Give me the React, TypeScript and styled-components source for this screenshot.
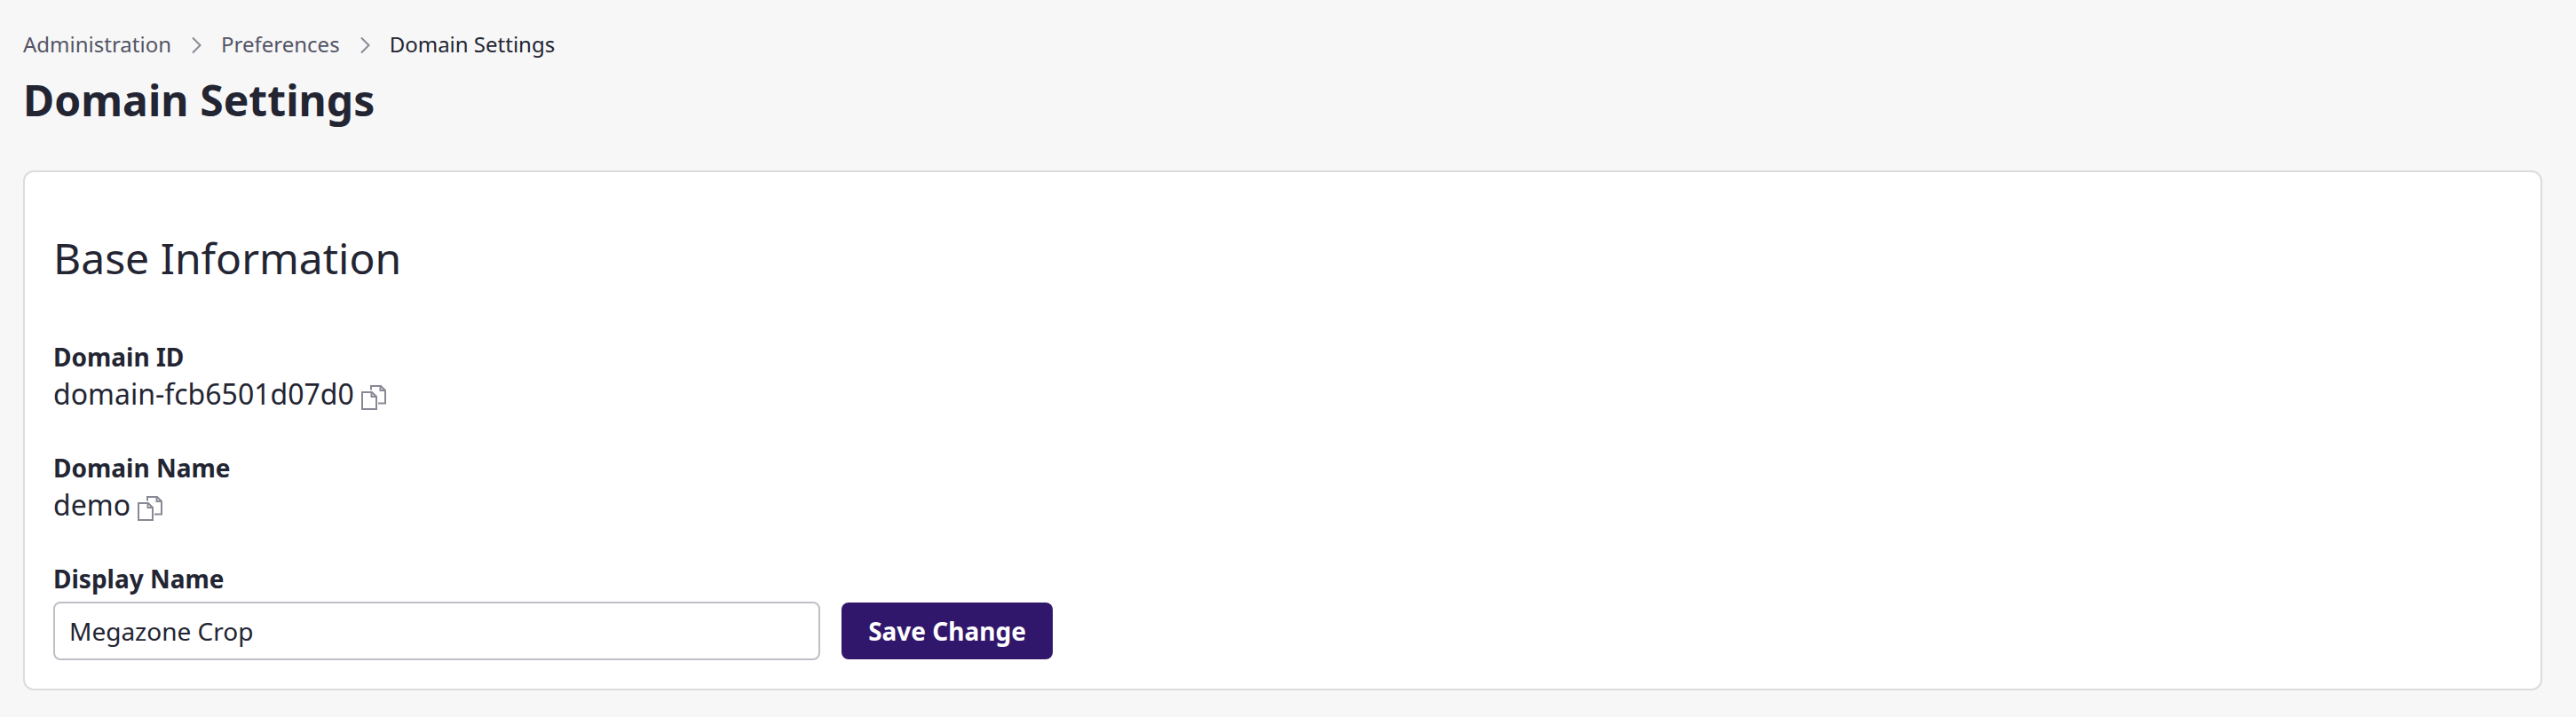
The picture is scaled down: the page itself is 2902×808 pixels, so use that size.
import React from 'react';
import styled, { createGlobalStyle } from 'styled-components';

const GlobalStyle = createGlobalStyle`
  *, *::before, *::after { box-sizing: border-box; }
  body {
    margin: 0;
    background: #f7f7f7;
    color: #232533;
    font-family: "Noto Sans", sans-serif;
  }
`;

const Page = styled.main`
  min-height: 808px;
  padding: 34px 38px 30px 26px;
`;

const Breadcrumbs = styled.nav`
  display: flex;
  align-items: center;
  height: 32px;
  font-size: 24px;
  line-height: 32px;
`;

const Crumb = styled.span<{ $current?: boolean }>`
  color: ${({ $current }) => ($current ? '#232533' : '#545566')};
`;

const Separator = styled.svg`
  width: 12px;
  height: 22px;
  margin: 2px 22px 0;
`;

const PageTitle = styled.h1`
  margin: 17px 0 49px;
  font-size: 48px;
  font-weight: 700;
  letter-spacing: 0.06px;
  line-height: 60px;
`;

const Card = styled.section`
  height: 586px;
  padding: 67px 32px 0;
  border: 2px solid #dcdcdd;
  border-radius: 12px;
  background: #fff;
`;

const CardTitle = styled.h2`
  margin: 0 0 61px;
  font-size: 48px;
  font-weight: 400;
  line-height: 60px;
`;

const Field = styled.div`
  margin-bottom: 41px;
`;

const Label = styled.div`
  font-size: 28px;
  font-weight: 700;
  line-height: 40px;
`;

const Value = styled.div`
  display: flex;
  height: 44px;
  font-size: 32px;
  line-height: 44px;
`;

const CopyIcon = styled.svg`
  width: 28px;
  height: 28px;
  margin: 12px 0 0 8px;
`;

const FormRow = styled.form`
  display: flex;
  align-items: center;
  gap: 24px;
  margin-top: 6px;
`;

const TextInput = styled.input`
  width: 864px;
  height: 66px;
  padding: 0 16px;
  border: 2px solid #bfc0c7;
  border-radius: 8px;
  background: #fff;
  color: inherit;
  font: 400 28px "Noto Sans", sans-serif;
  outline: none;
`;

const SaveButton = styled.button`
  width: 238px;
  height: 64px;
  padding: 0;
  border: 0;
  border-radius: 8px;
  background: #31176b;
  color: #fff;
  font: 700 28px "Noto Sans", sans-serif;
`;

const Chevron = () => (
  <Separator viewBox="0 0 12 22" fill="none" stroke="#898995" strokeWidth="2">
    <path d="M2 2.500 10.500 11 2 19.500" />
  </Separator>
);

const Copy = () => (
  <CopyIcon viewBox="0 0 28 28" fill="none" stroke="#898995" strokeWidth="2">
    <path d="M1 8h11l5 5v14H1z" />
    <path d="M11.500 8v5H17" />
    <path d="M11 5.500V1h11l5 5v14.500h-8" />
    <path d="M21.500 1v5H27" />
  </CopyIcon>
);

const details = [
  { label: 'Domain ID', value: 'domain-fcb6501d07d0' },
  { label: 'Domain Name', value: 'demo' },
];

export default function App() {
  return (
    <Page>
      <GlobalStyle />
      <Breadcrumbs>
        <Crumb>Administration</Crumb>
        <Chevron />
        <Crumb>Preferences</Crumb>
        <Chevron />
        <Crumb $current>Domain Settings</Crumb>
      </Breadcrumbs>
      <PageTitle>Domain Settings</PageTitle>
      <Card>
        <CardTitle>Base Information</CardTitle>
        {details.map(({ label, value }) => (
          <Field key={label}>
            <Label>{label}</Label>
            <Value>
              {value}
              <Copy />
            </Value>
          </Field>
        ))}
        <Label>Display Name</Label>
        <FormRow>
          <TextInput defaultValue="Megazone Crop" />
          <SaveButton type="button">Save Change</SaveButton>
        </FormRow>
      </Card>
    </Page>
  );
}
